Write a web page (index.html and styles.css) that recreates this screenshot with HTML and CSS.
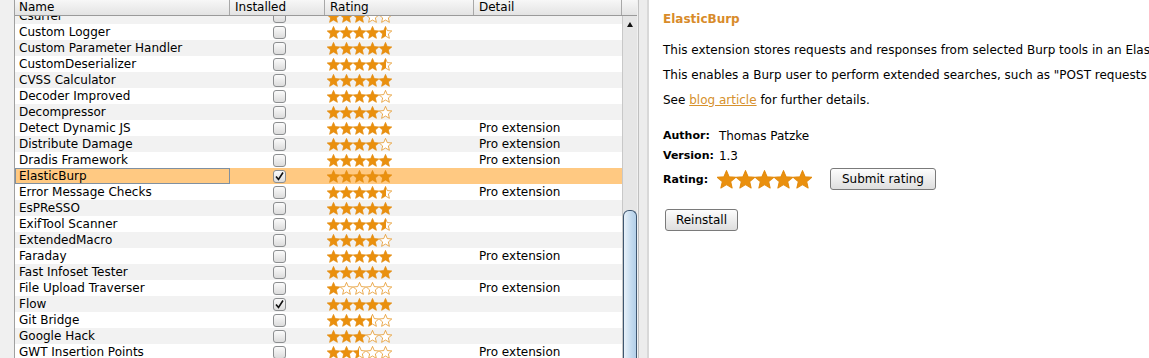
FILE: index.html
```html
<!DOCTYPE html>
<html lang="en">
<head>
  <meta charset="UTF-8">
  <title>BApp Store</title>
  <link rel="stylesheet" href="styles.css">
</head>
<body>

  <svg class="defs" width="0" height="0">
    <defs>
      <linearGradient id="half" x1="0" x2="1" y1="0" y2="0">
        <stop offset="50%" stop-color="#ea900e"/>
        <stop offset="50%" stop-color="#fff"/>
      </linearGradient>
    </defs>
  </svg>

  <div class="app">
    <div class="list-pane">
      <div class="table">
        <div class="thead">
          <div class="col name">Name</div>
          <div class="col inst">Installed</div>
          <div class="col rate">Rating</div>
          <div class="col detail">Detail</div>
          <div class="corner"></div>
        </div>
        <div class="tbody">
          <div class="rows-clip">
            <div class="rows" id="rows"></div>
          </div>
          <div class="scrollbar">
            <div class="sb-up"><span class="arrow"></span></div>
            <div class="sb-space"></div>
            <div class="sb-thumb"></div>
          </div>
        </div>
      </div>
      <div class="splitter"></div>
    </div>

    <div class="detail-pane">
      <div class="title">ElasticBurp</div>
      <div class="line">This extension stores requests and responses from selected Burp tools in an ElasticSearch index.</div>
      <div class="line">This enables a Burp user to perform extended searches, such as "POST requests with status 200".</div>
      <div class="line">See <a href="#">blog article</a> for further details.</div>

      <div class="meta">
        <b>Author:</b><span>Thomas Patzke</span>
        <b>Version:</b><span>1.3</span>
      </div>
      <div class="rating-row">
        <b>Rating:</b>
        <span class="big-stars" id="bigStars"></span>
        <button>Submit rating</button>
      </div>
      <button class="reinstall">Reinstall</button>
    </div>
  </div>

  <script>
    // Name, installiert, Bewertung, Pro
    const bapps = [
      ['Csurfer', 0, 3, 0],
      ['Custom Logger', 0, 4.5, 0],
      ['Custom Parameter Handler', 0, 5, 0],
      ['CustomDeserializer', 0, 4.5, 0],
      ['CVSS Calculator', 0, 5, 0],
      ['Decoder Improved', 0, 4, 0],
      ['Decompressor', 0, 4, 0],
      ['Detect Dynamic JS', 0, 5, 1],
      ['Distribute Damage', 0, 4, 1],
      ['Dradis Framework', 0, 5, 1],
      ['ElasticBurp', 1, 5, 0],
      ['Error Message Checks', 0, 4.5, 1],
      ['EsPReSSO', 0, 5, 0],
      ['ExifTool Scanner', 0, 4.5, 0],
      ['ExtendedMacro', 0, 4, 0],
      ['Faraday', 0, 5, 1],
      ['Fast Infoset Tester', 0, 5, 0],
      ['File Upload Traverser', 0, 1, 1],
      ['Flow', 1, 5, 0],
      ['Git Bridge', 0, 3.5, 0],
      ['Google Hack', 0, 3, 0],
      ['GWT Insertion Points', 0, 2.5, 1]
    ];
    const selected = 'ElasticBurp';
    const STAR = '6.5,0.4 8.26,4.57 12.78,4.96 9.35,7.93 10.38,12.34 6.5,10 2.62,12.34 3.65,7.93 0.22,4.96 4.74,4.57';

    function stars(value, size) {
      let html = '';
      for (let i = 0; i < 5; i++) {
        let fill = '#ea900e';
        if (value <= i) fill = '#fff';
        else if (value < i + 1) fill = 'url(#half)';
        html += '<svg width="' + size + '" height="' + size + '" viewBox="0 0 13 13">' +
          '<polygon points="' + STAR + '" fill="' + fill + '" stroke="#e28a0c" stroke-width="0.7" stroke-linejoin="round"/></svg>';
      }
      return html;
    }

    const rows = document.getElementById('rows');
    bapps.forEach(([name, inst, rating, pro], i) => {
      const row = document.createElement('div');
      row.className = 'row' + (i % 2 === 0 ? ' odd' : '') + (name === selected ? ' selected' : '');
      row.innerHTML =
        '<div class="col name">' + name + '</div>' +
        '<div class="col inst"><span class="check' + (inst ? ' on' : '') + '">' +
          (inst ? '<svg width="11" height="11" viewBox="0 0 11 11"><path d="M2 5.5 L4.5 8.5 L9 1.5" fill="none" stroke="#111" stroke-width="1.6"/></svg>' : '') +
        '</span></div>' +
        '<div class="col rate">' + stars(rating, 13) + '</div>' +
        '<div class="col detail">' + (pro ? 'Pro extension' : '') + '</div>';
      rows.appendChild(row);
    });

    document.getElementById('bigStars').innerHTML = stars(5, 19);
  </script>

</body>
</html>
```

FILE: styles.css
```css
/* Grundlayout */
body {
  margin: 0;
  background: #f0f0f0;
  color: #000;
  font-family: "DejaVu Sans", sans-serif;
  font-size: 12px;
  overflow: hidden;
}
.defs { position: absolute; }
.app {
  display: flex;
  height: 358px;
  overflow: hidden;
}
/* Liste links */
.list-pane {
  display: flex;
  width: 649px;
  flex-shrink: 0;
  padding-left: 14px;
  box-sizing: border-box;
}
.table {
  display: flex;
  flex-direction: column;
  width: 623px;
  border-left: 1px solid #a0a0a0;
  box-sizing: border-box;
}
.thead {
  display: flex;
  height: 16px;
  background: linear-gradient(#f7f7f7, #e3e3e3);
  border-bottom: 1px solid #9a9a9a;
  box-sizing: border-box;
  line-height: 14px;
}
.thead .col {
  border-right: 1px solid #a8a8a8;
  box-sizing: border-box;
}
.thead .col.name { padding-left: 4px; }
.thead .col.inst { padding-left: 5px; }
.thead .col.rate { padding-left: 5px; }
.corner { flex: 1; }
.col { flex-shrink: 0; overflow: hidden; white-space: nowrap; }
.col.name   { width: 215px; }
.col.inst   { width: 95px; }
.col.rate   { width: 149px; }
.col.detail { width: 148px; }
.thead .col.detail { padding-left: 5px; }
/* Tabellenkörper */
.tbody {
  flex: 1;
  display: flex;
  overflow: hidden;
}
.rows-clip {
  width: 607px;
  overflow: hidden;
  background: #fff;
}
.rows { margin-top: -8px; }
.row {
  display: flex;
  height: 16px;
  line-height: 16px;
  background: #fff;
}
.row.odd { background: #f2f2f2; }
.row.selected { background: #ffc982; }
.row .col.name { padding-left: 4px; box-sizing: border-box; }
.row.selected .col.name {
  outline: 1px solid #8090a0;
  outline-offset: -1px;
}
.row .col.inst {
  display: flex;
  align-items: center;
  justify-content: center;
  padding-left: 4px;
  box-sizing: border-box;
}
.check {
  width: 11px;
  height: 11px;
  border: 1px solid #8c8e90;
  border-radius: 3px;
  background: linear-gradient(#fbfbfb, #dcdcdc);
  display: flex;
  align-items: center;
  justify-content: center;
}
.row .col.rate {
  display: flex;
  align-items: center;
  padding-left: 2px;
  box-sizing: border-box;
}
.row .col.detail { padding-left: 5px; box-sizing: border-box; }
/* Scrollbar */
.scrollbar {
  width: 15px;
  display: flex;
  flex-direction: column;
  background: #e6e6e6;
  border-left: 1px solid #c8c8c8;
  box-sizing: border-box;
}
.sb-up {
  height: 18px;
  display: flex;
  justify-content: center;
  padding-top: 6px;
  box-sizing: border-box;
}
.arrow {
  width: 0;
  height: 0;
  border-left: 3px solid transparent;
  border-right: 3px solid transparent;
  border-bottom: 5px solid #111;
}
.sb-space { height: 176px; }
.sb-thumb {
  flex: 1;
  border: 1px solid #3e5670;
  border-bottom: none;
  border-radius: 6px 6px 0 0;
  background: linear-gradient(90deg, #e8f1f9, #c4dbef 60%, #b3cfe8);
}
.splitter {
  flex: 1;
  border-left: 1px solid #c0c0c0;
  border-right: 2px solid #d8d8d8;
  background: #ececec;
  margin-left: 1px;
}
/* Detailbereich rechts */
.detail-pane {
  flex: 1;
  background: #fff;
  padding: 9px 0 0 14px;
  white-space: nowrap;
  overflow: hidden;
}
.title {
  color: #d88b2a;
  font-weight: bold;
  font-size: 12px;
  line-height: 20px;
  margin-bottom: 9px;
}
.line { line-height: 25px; }
.line a { color: #d6912d; }
.meta {
  display: grid;
  grid-template-columns: auto auto;
  column-gap: 5px;
  line-height: 20px;
  margin-top: 13px;
  justify-content: start;
}
.meta b, .rating-row b { font-size: 11px; }
.rating-row {
  display: flex;
  align-items: center;
  height: 26px;
}
.rating-row b { width: 54px; }
.big-stars { display: flex; width: 113px; }
button {
  font-family: "DejaVu Sans", sans-serif;
  font-size: 12px;
  height: 22px;
  padding: 0 11px;
  border: 1px solid #7a7a7a;
  border-radius: 3px;
  background: linear-gradient(#fdfdfd, #dedede);
  color: #000;
}
.reinstall {
  display: block;
  margin: 17px 0 0 2px;
  width: 73px;
  padding: 0;
}
```
